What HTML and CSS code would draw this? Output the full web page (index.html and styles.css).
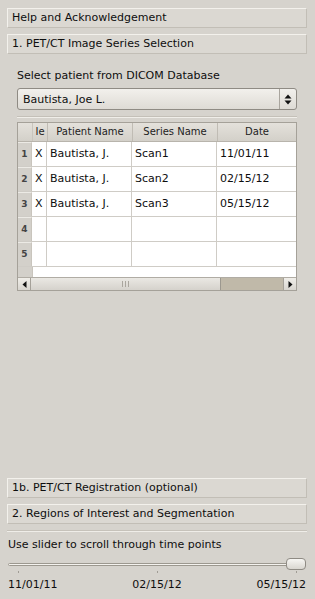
FILE: index.html
```html
<!DOCTYPE html>
<html>
<head>
<meta charset="utf-8">
<link rel="stylesheet" href="styles.css">
</head>
<body>
<div class="page">
  <div class="bar">Help and Acknowledgement</div>
  <div class="bar">1. PET/CT Image Series Selection</div>
  <div class="section">
    <div class="label">Select patient from DICOM Database</div>
    <div class="combo">
      <span class="combo-text">Bautista, Joe L.</span>
      <span class="combo-btn">
        <svg width="8" height="11" viewBox="0 0 8 11"><path d="M4 0.5 L7.5 4.5 L0.5 4.5 Z M4 10.5 L7.5 6.5 L0.5 6.5 Z" fill="#111"/></svg>
      </span>
    </div>
    <div class="sep"></div>
    <div class="table">
      <div class="thead">
        <div class="corner"></div>
        <div class="th c-ie">Ie</div>
        <div class="th c-pn">Patient Name</div>
        <div class="th c-sn">Series Name</div>
        <div class="th c-dt">Date</div>
      </div>
      <div class="tr"><div class="rn">1</div><div class="td c-ie">X</div><div class="td c-pn">Bautista, J.</div><div class="td c-sn">Scan1</div><div class="td c-dt">11/01/11</div></div>
      <div class="tr"><div class="rn">2</div><div class="td c-ie">X</div><div class="td c-pn">Bautista, J.</div><div class="td c-sn">Scan2</div><div class="td c-dt">02/15/12</div></div>
      <div class="tr"><div class="rn">3</div><div class="td c-ie">X</div><div class="td c-pn">Bautista, J.</div><div class="td c-sn">Scan3</div><div class="td c-dt">05/15/12</div></div>
      <div class="tr"><div class="rn">4</div><div class="td c-ie"></div><div class="td c-pn"></div><div class="td c-sn"></div><div class="td c-dt"></div></div>
      <div class="tr"><div class="rn">5</div><div class="td c-ie"></div><div class="td c-pn"></div><div class="td c-sn"></div><div class="td c-dt"></div></div>
      <div class="filler"><div class="rn-fill"></div><div class="white-fill"></div></div>
      <div class="hscroll">
        <div class="arrow"><svg width="5" height="7" viewBox="0 0 5 7"><path d="M4.5 0 L0.5 3.5 L4.5 7 Z" fill="#111"/></svg></div>
        <div class="thumb"><span class="grip"></span></div>
        <div class="track"></div>
        <div class="arrow right"><svg width="5" height="7" viewBox="0 0 5 7"><path d="M0.5 0 L4.5 3.5 L0.5 7 Z" fill="#111"/></svg></div>
      </div>
    </div>
  </div>
  <div class="spacer"></div>
  <div class="bar">1b. PET/CT Registration (optional)</div>
  <div class="bar">2. Regions of Interest and Segmentation</div>
  <div class="sep2"></div>
  <div class="slider-label">Use slider to scroll through time points</div>
  <div class="slider">
    <div class="track-line"></div>
    <div class="handle"><span class="hgrip"></span></div>
  </div>
  <div class="ticks"><span class="tick"></span><span class="tick"></span><span class="tick"></span></div>
  <div class="tick-labels"><span>11/01/11</span><span>02/15/12</span><span>05/15/12</span></div>
</div>
</body>
</html>
```

FILE: styles.css
```css
html, body {
  margin: 0;
  padding: 0;
  background: #d6d3cd;
}
body {
  font-family: "DejaVu Sans", "Liberation Sans", sans-serif;
  font-size: 11px;
  color: #0e0e0e;
}
.page {
  width: 315px;
  height: 599px;
  box-sizing: border-box;
  padding: 8px 8px 7px 7px;
  display: flex;
  flex-direction: column;
}
.bar {
  height: 20px;
  box-sizing: border-box;
  border-top: 1px solid #f3f1ec;
  border-left: 1px solid #f3f1ec;
  border-bottom: 1px solid #c2beb6;
  border-right: 1px solid #c2beb6;
  background: #dbd8d2;
  padding-left: 4px;
  line-height: 18px;
  margin-bottom: 6px;
  white-space: nowrap;
}
.section {
  padding: 9px 10px 0 10px;
}
.label {
  line-height: 14px;
  margin-bottom: 5px;
}
.combo {
  height: 22px;
  box-sizing: border-box;
  border: 1px solid #8f8b84;
  border-radius: 3px;
  background: linear-gradient(#f2f0ec, #dedbd5);
  display: flex;
  align-items: center;
}
.combo-text {
  flex: 1;
  padding-left: 5px;
}
.combo-btn {
  width: 16px;
  height: 20px;
  border-left: 1px solid #a9a59e;
  display: flex;
  align-items: center;
  justify-content: center;
}
.sep {
  margin-top: 6px;
  height: 1px;
  border-top: 1px solid #c4c0b8;
  background: #f0eee9;
}
.table {
  margin-top: 4px;
  border: 1px solid #a5a199;
  background: #fff;
  font-size: 11px;
}
.thead {
  display: flex;
  height: 18px;
  background: linear-gradient(#e4e1db, #d3d0c9);
  border-bottom: 1px solid #b8b4ac;
  font-size: 10px;
  color: #222;
}
.corner {
  width: 14px;
  border-right: 1px solid #c9c5bd;
}
.th {
  box-sizing: border-box;
  text-align: center;
  line-height: 18px;
  border-right: 1px solid #c0bcb4;
}
.c-ie { width: 15px; }
.c-pn { width: 85px; }
.c-sn { width: 85px; }
.c-dt { flex: 1; border-right: none !important; }
.tr {
  display: flex;
  height: 25px;
  box-sizing: border-box;
  border-bottom: 1px solid #cfccc6;
}
.rn {
  width: 14px;
  box-sizing: border-box;
  background: #d3d0ca;
  border-right: 1px solid #c9c5bd;
  border-top: 1px solid #eceae5;
  text-align: center;
  line-height: 22px;
  font-size: 9px;
  font-weight: bold;
  color: #444;
}
.td {
  box-sizing: border-box;
  border-right: 1px solid #cfccc6;
  line-height: 24px;
  padding-left: 3px;
  white-space: nowrap;
}
.filler {
  display: flex;
  height: 10px;
}
.rn-fill {
  width: 14px;
  background: #d3d0ca;
  border-right: 1px solid #c9c5bd;
}
.white-fill { flex: 1; }
.hscroll {
  display: flex;
  height: 13px;
  box-sizing: border-box;
  border-top: 1px solid #b0aca4;
  background: #d6d3cd;
}
.arrow {
  width: 12px;
  display: flex;
  align-items: center;
  justify-content: center;
  background: linear-gradient(#f0eee9, #d8d5cf);
  border-right: 1px solid #a5a199;
}
.arrow.right {
  border-right: none;
  border-left: 1px solid #a5a199;
}
.thumb {
  width: 189px;
  background: linear-gradient(#eae8e3, #d5d2cc);
  border-right: 1px solid #9c988f;
  display: flex;
  align-items: center;
  justify-content: center;
}
.grip {
  width: 5px;
  height: 6px;
  border-left: 1px solid #aaa69e;
  border-right: 1px solid #aaa69e;
  position: relative;
}
.grip::after {
  content: "";
  position: absolute;
  left: 2px;
  top: 0;
  width: 1px;
  height: 6px;
  background: #aaa69e;
}
.track {
  flex: 1;
  background: #c0b9a9;
}
.spacer { flex: 1; }
.sep2 {
  height: 1px;
  border-top: 1px solid #c6c2ba;
  background: #efede8;
  margin-bottom: 6px;
}
.slider-label {
  line-height: 14px;
  padding-left: 1px;
}
.slider {
  position: relative;
  height: 13px;
  margin-top: 6px;
  display: flex;
  align-items: center;
}
.track-line {
  width: 283px;
  margin-left: 1px;
  height: 3px;
  box-sizing: border-box;
  border: 1px solid #9c988f;
  border-radius: 2px;
  background: #f4f2ee;
}
.handle {
  position: absolute;
  right: 1px;
  top: 0;
  width: 20px;
  height: 12px;
  box-sizing: border-box;
  border: 1px solid #8f8b84;
  border-radius: 4px;
  background: linear-gradient(#f7f6f3, #d9d6d0);
  display: flex;
  align-items: center;
  justify-content: center;
}
.hgrip {
  width: 6px;
  height: 6px;
  background-image: radial-gradient(#b3afa7 40%, transparent 45%);
  background-size: 2px 2px;
}
.ticks {
  display: flex;
  justify-content: space-between;
  padding: 0 10px 0 11px;
  height: 4px;
}
.tick {
  width: 1px;
  height: 2px;
  background: #a09c94;
}
.tick-labels {
  display: flex;
  justify-content: space-between;
  padding: 0 1px 0 1px;
  margin-top: 3px;
  line-height: 14px;
}
```
